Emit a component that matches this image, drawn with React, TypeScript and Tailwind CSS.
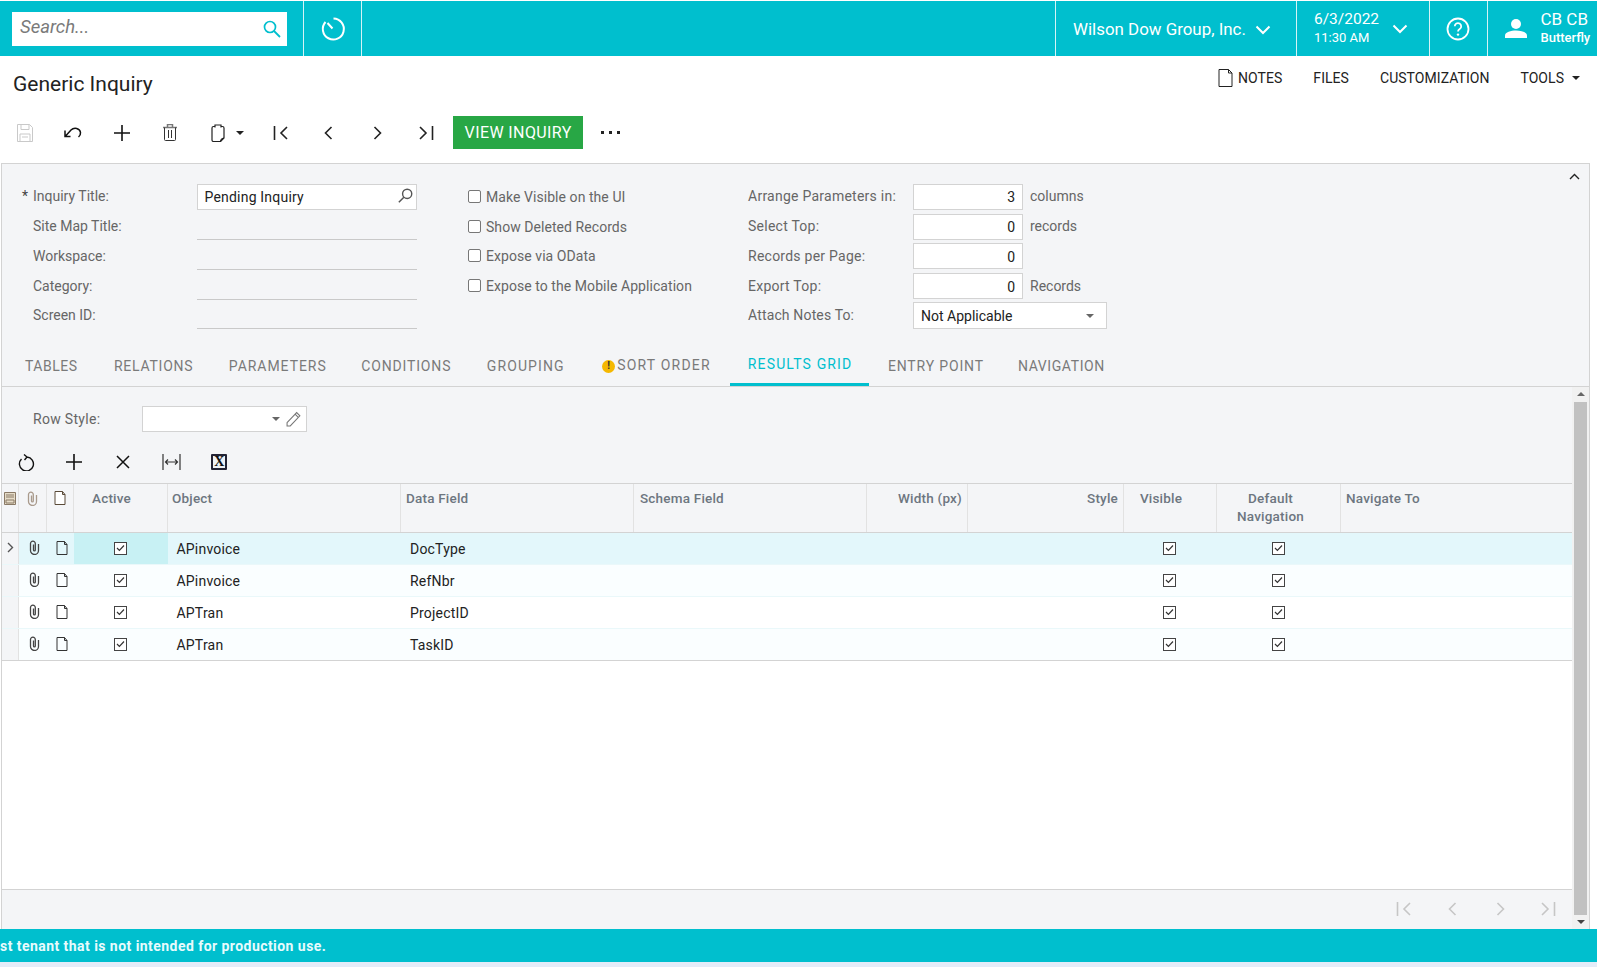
import React from "react";

const ROW_COLS =
  "grid grid-cols-[17px_28px_27px_94px_233px_233px_233px_101px_156px_93px_124px_232px]";

const Chevron = ({ className = "" }: { className?: string }) => (
  <svg width="16" height="10" viewBox="0 0 16 10" fill="none" className={className}>
    <path d="M1.500 1.500 8 8l6.500-6.500" stroke="currentColor" strokeWidth="2" />
  </svg>
);

const Caret = ({ className = "" }: { className?: string }) => (
  <svg width="8" height="4" viewBox="0 0 8 4" className={className}>
    <path d="M0 0h8L4 4z" fill="currentColor" />
  </svg>
);

const Search = ({ className = "" }: { className?: string }) => (
  <svg width="18" height="18" viewBox="0 0 18 18" fill="none" className={className}>
    <circle cx="7" cy="7" r="5.500" stroke="currentColor" strokeWidth="1.700" />
    <path d="m11 11 6 6" stroke="currentColor" strokeWidth="1.800" />
  </svg>
);

const Clip = ({ className = "" }: { className?: string }) => (
  <svg width="11" height="15" viewBox="0 0 11 15" fill="none" className={className}>
    <path
      d="M9.500 4v6.500a4 4 0 0 1-8 0V3.600a2.400 2.400 0 0 1 4.800 0V10a.9.9 0 0 1-1.800 0V4.400"
      stroke="currentColor"
      strokeWidth="1.300"
    />
  </svg>
);

const Note = ({ className = "" }: { className?: string }) => (
  <svg width="12" height="14" viewBox="0 0 12 14" fill="none" className={className}>
    <path d="M1 .5h7.500L11 3.500v10H1zM8.500 .5v3H11" stroke="currentColor" strokeWidth="1" />
  </svg>
);

const Check = () => (
  <span className="flex h-[13px] w-[13px] items-center justify-center border border-[#444] bg-white">
    <svg width="9" height="8" viewBox="0 0 9 8" fill="none">
      <path d="m1 4 2.400 2.400L8 1.500" stroke="#333" strokeWidth="1.200" />
    </svg>
  </span>
);

const EmptyCheck = () => (
  <span className="h-[13px] w-[13px] rounded-[2px] border border-[#777] bg-white" />
);

const First = ({ color = "#222" }: { color?: string }) => (
  <svg width="16" height="14" viewBox="0 0 16 14" fill="none">
    <path d="M1.500 0v14M14 1 8 7l6 6" stroke={color} strokeWidth="1.600" />
  </svg>
);
const Prev = ({ color = "#222" }: { color?: string }) => (
  <svg width="9" height="14" viewBox="0 0 9 14" fill="none">
    <path d="M7.500 1 1.500 7l6 6" stroke={color} strokeWidth="1.600" />
  </svg>
);
const Next = ({ color = "#222" }: { color?: string }) => (
  <svg width="9" height="14" viewBox="0 0 9 14" fill="none">
    <path d="m1.500 1 6 6-6 6" stroke={color} strokeWidth="1.600" />
  </svg>
);
const Last = ({ color = "#222" }: { color?: string }) => (
  <svg width="16" height="14" viewBox="0 0 16 14" fill="none">
    <path d="M14.500 0v14M2 1l6 6-6 6" stroke={color} strokeWidth="1.600" />
  </svg>
);

const Plus = () => (
  <svg width="16" height="16" viewBox="0 0 16 16" fill="none">
    <path d="M8 0v16M0 8h16" stroke="#111" strokeWidth="1.600" />
  </svg>
);

const IconSlot = ({ children }: { children: React.ReactNode }) => (
  <span className="flex w-[48.3px] items-center justify-center">{children}</span>
);

const tabs = [
  { label: "TABLES", cls: "tracking-[0.5px] pr-[19px]" },
  { label: "RELATIONS", cls: "tracking-[0.75px] pr-[18px]" },
  { label: "PARAMETERS", cls: "tracking-[0.95px] pr-[17px]" },
  { label: "CONDITIONS", cls: "tracking-[0.85px] pr-[18px]" },
  { label: "GROUPING", cls: "tracking-[1.1px] pr-[17px]" },
];

const rows = [
  { object: "APinvoice", field: "DocType", bg: "bg-[#e3f7fb]" },
  { object: "APinvoice", field: "RefNbr", bg: "bg-[#fafeff]" },
  { object: "APTran", field: "ProjectID", bg: "bg-white" },
  { object: "APTran", field: "TaskID", bg: "bg-[#fafeff]" },
];

const leftFields = ["Site Map Title:", "Workspace:", "Category:", "Screen ID:"];

const checks = [
  "Make Visible on the UI",
  "Show Deleted Records",
  "Expose via OData",
  "Expose to the Mobile Application",
];

const numbers = [
  { label: "Arrange Parameters in:", value: "3", suffix: "columns" },
  { label: "Select Top:", value: "0", suffix: "records" },
  { label: "Records per Page:", value: "0", suffix: "" },
  { label: "Export Top:", value: "0", suffix: "Records" },
];

export default function App() {
  return (
    <div className="flex h-[967px] w-full flex-col overflow-hidden bg-white font-['Roboto',sans-serif] text-[14px]">
      {/* top bar */}
      <div className="mt-px flex h-[55px] shrink-0 bg-[#00bfce] text-white">
        <div className="flex w-[304px] items-center border-r border-[#d5f3f6] pl-3">
          <div className="flex h-[34px] w-[275px] items-center justify-between bg-white pl-2 pr-[6px] text-[#00bfce]">
            <span className="-translate-y-px text-[18.5px] italic text-[#7a7a7a]">Search...</span>
            <Search />
          </div>
        </div>
        <div className="flex w-[58px] items-center justify-center border-r border-[#d5f3f6]">
          <svg width="26" height="26" viewBox="0 0 26 26" fill="none">
            <path d="M13.500 2.500A10.500 10.500 0 1 1 5.500 6M12.500 12.500 7.500 7" stroke="white" strokeWidth="2" />
          </svg>
        </div>
        <div className="w-[694px] border-r border-[#d5f3f6]" />
        <div className="flex w-[241px] items-center border-r border-[#d5f3f6] pl-[17px] pt-[3px]">
          <span className="text-[16.9px]">Wilson Dow Group, Inc.</span>
          <Chevron className="ml-[9px]" />
        </div>
        <div className="flex w-[132.5px] items-center border-r border-[#d5f3f6] pl-[17px]">
          <div className="-mt-[2px] flex w-[78px] flex-col">
            <span className="text-[15.5px] leading-[20px]">6/3/2022</span>
            <span className="text-[13px] leading-[18px]">11:30 AM</span>
          </div>
          <Chevron />
        </div>
        <div className="flex w-[58px] items-center justify-center border-r border-[#d5f3f6]">
          <svg width="24" height="24" viewBox="0 0 24 24" fill="none">
            <circle cx="12" cy="12" r="10.500" stroke="white" strokeWidth="1.800" />
            <path
              d="M8.800 9.300a3.200 3.200 0 1 1 4.900 2.700c-1.100.7-1.700 1.300-1.700 2.600"
              stroke="white"
              strokeWidth="1.800"
            />
            <circle cx="12" cy="17.600" r="1.200" fill="white" />
          </svg>
        </div>
        <div className="flex flex-1 items-center pl-[17px]">
          <svg width="22" height="22" viewBox="0 0 22 22" fill="white">
            <circle cx="11" cy="6" r="5" />
            <path d="M0 20v-2.500C0 14 6 12.500 11 12.500s11 1.500 11 5V20z" />
          </svg>
          <div className="-mt-[2px] ml-[14px] flex flex-col">
            <span className="text-[17px] leading-[20px]">CB CB</span>
            <span className="text-[13px] font-medium leading-[18px]">Butterfly</span>
          </div>
        </div>
      </div>

      {/* title + actions */}
      <div className="flex h-[44px] shrink-0 items-start justify-between pl-[13px]">
        <h1 className="mt-[15px] text-[21px] font-normal leading-[26px] text-[#222]">
          Generic Inquiry
        </h1>
        <div className="mt-[13px] flex items-center text-[14px] leading-[18px] tracking-[0.05px] text-[#222]">
          <svg width="15" height="18" viewBox="0 0 15 18" fill="none" className="mr-[5px]">
            <path d="M1 .5h9.500L14 4v13.500H1zM10.500 .5V4H14" stroke="#222" />
          </svg>
          <span>NOTES</span>
          <span className="ml-[31px]">FILES</span>
          <span className="ml-[31px]">CUSTOMIZATION</span>
          <span className="ml-[31px]">TOOLS</span>
          <Caret className="ml-2 mr-[17px]" />
        </div>
      </div>

      {/* main toolbar */}
      <div className="mt-[16px] flex h-[33px] shrink-0 items-center pl-[1px]">
        <IconSlot>
          <svg width="16" height="18" viewBox="0 0 16 18" fill="none" stroke="#c9c9c9">
            <path d="M.5.5h12l3 3v14H.5zM4 .5v5h8v-5M3 17.500V10h10v7.500M5 13h6" />
          </svg>
        </IconSlot>
        <IconSlot>
          <svg width="18" height="13" viewBox="0 0 18 13" fill="none" stroke="#111" strokeWidth="1.500">
            <path d="M1 4.500V10.500H6.500M1.600 10 7 4C10 1 16 2 16.500 6.500c.2 2-.8 3.500-2 4.500" />
          </svg>
        </IconSlot>
        <IconSlot>
          <Plus />
        </IconSlot>
        <IconSlot>
          <svg width="14" height="17" viewBox="0 0 14 17" fill="none" stroke="#333">
            <path d="M0 3.500h14M4.500 3V.5h5V3" stroke="#777" strokeWidth="1.500" />
            <path d="M1.500 3.500v12a1 1 0 0 0 1 1h9a1 1 0 0 0 1-1v-12M5.500 6v8M8.500 6v8" />
          </svg>
        </IconSlot>
        <span className="flex w-[62.3px] items-center pl-[17px]">
          <svg width="14" height="18" viewBox="0 0 14 18" fill="none" stroke="#222" strokeWidth="1.200">
            <path d="M4 2.500H2.500A1.500 1.500 0 0 0 1 4v12a1.500 1.500 0 0 0 1.500 1.500h7L13 14V4a1.500 1.500 0 0 0-1.500-1.500H10" />
            <path d="M4 3.500V1h6v2.500M9.500 17.500c.2-2 1.500-3.300 3.500-3.500" />
          </svg>
          <Caret className="ml-[11px] text-[#222]" />
        </span>
        <IconSlot>
          <First />
        </IconSlot>
        <IconSlot>
          <Prev />
        </IconSlot>
        <IconSlot>
          <Next />
        </IconSlot>
        <IconSlot>
          <Last />
        </IconSlot>
        <button className="ml-[3.5px] flex h-[33px] w-[130px] items-center justify-center bg-[#28a745] text-[16px] tracking-[0.4px] text-white">
          VIEW INQUIRY
        </button>
        <span className="ml-[18px] flex gap-[5.5px]">
          <span className="h-[2.5px] w-[2.5px] bg-[#222]" />
          <span className="h-[2.5px] w-[2.5px] bg-[#222]" />
          <span className="h-[2.5px] w-[2.5px] bg-[#222]" />
        </span>
      </div>

      {/* panel */}
      <div className="ml-px mr-[7px] mt-[14px] flex min-h-0 flex-1 flex-col border-x border-t border-[#d3d3d3] bg-[#f4f5f7]">
        <div className="flex h-[182px] shrink-0 pt-[18px]">
          <div className="w-[415px] pl-[20px]">
            <div className="flex h-[29.75px] items-center">
              <span className="w-[11px] text-[#444]">*</span>
              <span className="w-[163.5px] text-[#666]">Inquiry Title:</span>
              <div className="flex h-[26px] w-[220.5px] items-center justify-between border border-[#d3d3d3] bg-white pl-[7px] pr-[3px] pt-[2px] tracking-[0.2px] text-[#222]">
                <span>Pending Inquiry</span>
                <Search className="h-[15px] w-[15px] -translate-y-[2px] -scale-x-100 text-[#555]" />
              </div>
            </div>
            {leftFields.map((l) => (
              <div key={l} className="flex h-[29.75px] items-center pl-[11px]">
                <span className="w-[163.5px] text-[#666]">{l}</span>
                <div className="h-[27px] w-[220.5px] border-b border-[#c9c9c9]" />
              </div>
            ))}
          </div>
          <div className="ml-[50.5px] w-[280.5px]">
            {checks.map((c) => (
              <div key={c} className="flex h-[29.5px] items-center gap-[5.5px] tracking-[0.06px] text-[#666]">
                <EmptyCheck />
                <span className="translate-y-px">{c}</span>
              </div>
            ))}
          </div>
          <div>
            {numbers.map((n) => (
              <div key={n.label} className="flex h-[29.75px] items-center text-[#666]">
                <span className="w-[165px] tracking-[0.25px]">{n.label}</span>
                <div className="flex h-[26px] w-[110px] items-center justify-end border border-[#d3d3d3] bg-white pr-[7px] pt-[2px] text-[#222]">
                  {n.value}
                </div>
                <span className="ml-[7px]">{n.suffix}</span>
              </div>
            ))}
            <div className="flex h-[29.75px] items-center text-[#666]">
              <span className="w-[165px] tracking-[0.15px]">Attach Notes To:</span>
              <div className="flex h-[27px] w-[194px] items-center justify-between border border-[#d3d3d3] bg-white pl-[7px] pr-[12px] pt-[2px] text-[#222]">
                <span>Not Applicable</span>
                <Caret className="-translate-y-px text-[#666]" />
              </div>
            </div>
          </div>
          <div className="ml-auto mr-[9px] mt-[-9px]">
            <svg width="11" height="7" viewBox="0 0 11 7" fill="none">
              <path d="m1 6 4.500-4.500L10 6" stroke="#222" strokeWidth="1.400" />
            </svg>
          </div>
        </div>

        {/* tabs */}
        <div className="flex h-[41px] shrink-0 border-b border-[#d3d3d3] pl-[5.5px] text-[14px] text-[#7a7a7a]">
          {tabs.map((t) => (
            <div key={t.label} className={`flex items-center pl-[17.5px] ${t.cls}`}>
              {t.label}
            </div>
          ))}
          <div className="flex items-center pl-[20.5px] pr-[19.5px] tracking-[1.2px]">
            <span className="mr-[2px] flex h-[13px] w-[13px] items-center justify-center rounded-full bg-[#f5b800] text-[10px] font-bold leading-none tracking-normal text-[#333]">
              !
            </span>
            <span className="-translate-y-px">SORT ORDER</span>
          </div>
          <div className="flex items-center border-b-[3px] border-[#00bfce] pl-[17.5px] pr-[17px] tracking-[1.15px] text-[#00bfce]">
            RESULTS GRID
          </div>
          <div className="flex items-center pl-[18.5px] pr-[16.5px] tracking-[0.85px]">ENTRY POINT</div>
          <div className="flex items-center px-[17.5px] tracking-[0.6px]">NAVIGATION</div>
        </div>

        <div className="flex min-h-0 flex-1">
          <div className="flex min-w-0 flex-1 flex-col">
            {/* row style */}
            <div className="flex h-[59px] shrink-0 items-center pl-[31px] pt-[5px]">
              <span className="w-[109px] tracking-[0.3px] text-[#666]">Row Style:</span>
              <div className="flex h-[26px] w-[165px] items-center justify-end border border-[#d3d3d3] bg-white pr-[4px]">
                <Caret className="mr-[6px] text-[#666]" />
                <svg width="16" height="16" viewBox="0 0 15 15" fill="none" stroke="#777">
                  <path d="m1 11 9-9.500 3 3L4 14H1zM8.500 3l3 3" />
                </svg>
              </div>
            </div>

            {/* grid toolbar */}
            <div className="flex h-[37px] shrink-0 items-center pb-[5px]">
              <IconSlot>
                <svg width="17" height="17" viewBox="0 0 17 17" fill="none" stroke="#111" strokeWidth="1.400">
                  <path d="M3.500 5A7 7 0 1 0 9 3M6 .5 9 3l-2.500 3" />
                </svg>
              </IconSlot>
              <IconSlot>
                <Plus />
              </IconSlot>
              <IconSlot>
                <svg width="14" height="14" viewBox="0 0 14 14" fill="none">
                  <path d="m1 1 12 12M13 1 1 13" stroke="#111" strokeWidth="1.500" />
                </svg>
              </IconSlot>
              <IconSlot>
                <svg width="19" height="16" viewBox="0 0 19 16" fill="none" stroke="#333" strokeWidth="1.200">
                  <path d="M1 0v16M18 0v16M4 8h11M6 5.500 3.500 8 6 10.500M13 5.500 15.500 8 13 10.500" />
                </svg>
              </IconSlot>
              <IconSlot>
                <span className="flex h-[16px] w-[16px] items-center justify-center rounded-[1px] border-2 border-[#223] bg-[#eef2f6] font-['Liberation_Serif',serif] text-[14px] font-bold leading-none text-[#111]">
                  X
                </span>
              </IconSlot>
            </div>

            {/* grid */}
            <div className="flex min-h-0 flex-1 flex-col bg-white">
              <div className={`${ROW_COLS} h-[50px] shrink-0 border-y border-[#d3d3d3] bg-[#f4f5f7] text-[13.5px] font-medium leading-[18px] tracking-[0.2px] text-[#6d7680]`}>
                <div className="flex justify-center border-r border-[#e2e2e2] pt-[8px]">
                  <svg width="12" height="13" viewBox="0 0 12 13" fill="#e6dcc8" stroke="#8a7a66">
                    <path d="M.5.5h11v12H.5zM2 3h8M2 5h8M2 8h8v3H2z" />
                  </svg>
                </div>
                <div className="flex justify-center border-r border-[#e2e2e2] pt-[7px] text-[#a99a8c]">
                  <Clip />
                </div>
                <div className="flex justify-center border-r border-[#e2e2e2] pt-[7px] text-[#5a4a38]">
                  <Note className="fill-white" />
                </div>
                <div className="border-r border-[#e2e2e2] pr-[18px] pt-[5px] text-center">Active</div>
                <div className="border-r border-[#e2e2e2] pl-[4px] pt-[5px]">Object</div>
                <div className="border-r border-[#e2e2e2] pl-[5px] pt-[5px]">Data Field</div>
                <div className="border-r border-[#e2e2e2] pl-[6px] pt-[5px]">Schema Field</div>
                <div className="border-r border-[#e2e2e2] pr-[5px] pt-[5px] text-right">Width (px)</div>
                <div className="border-r border-[#e2e2e2] pr-[5px] pt-[5px] text-right">Style</div>
                <div className="border-r border-[#e2e2e2] pr-[18px] pt-[5px] text-center">Visible</div>
                <div className="border-r border-[#e2e2e2] pr-[16px] pt-[5px] text-center">
                  Default
                  <br />
                  Navigation
                </div>
                <div className="border-r border-[#e2e2e2] pl-[5px] pt-[5px]">Navigate To</div>
              </div>
              {rows.map((r, i) => (
                <div
                  key={i}
                  className={`${ROW_COLS} h-[32px] shrink-0 border-b ${i === 3 ? "border-[#d3d3d3]" : "border-[#eaf8fa]"} ${r.bg} tracking-[0.2px] text-[#222]`}
                >
                  <div className="flex items-center justify-center border-r border-[#e2e2e2] bg-[#f4f5f7] pb-[2px] text-[#666]">
                    {i === 0 && (
                      <svg width="7" height="11" viewBox="0 0 7 11" fill="none">
                        <path d="m1 1 4.500 4.500L1 10" stroke="#555" strokeWidth="1.400" />
                      </svg>
                    )}
                  </div>
                  <div className="flex items-center justify-center pb-[2px] pl-[3px] text-[#444]">
                    <Clip />
                  </div>
                  <div className="flex items-center justify-center pb-[2px] pl-[2px] text-[#333]">
                    <Note />
                  </div>
                  <div className={`flex items-center justify-center pb-[1px] pr-[2px] ${i === 0 ? "bg-[#c8f1f4]" : ""}`}>
                    <Check />
                  </div>
                  <div className="flex items-center pl-[8.5px] pt-[2px]">{r.object}</div>
                  <div className="flex items-center pl-[9px] pt-[2px]">{r.field}</div>
                  <div />
                  <div />
                  <div />
                  <div className="flex items-center justify-center pb-[1px] pr-[2px]">
                    <Check />
                  </div>
                  <div className="flex items-center justify-center pb-[1px] pr-[2px]">
                    <Check />
                  </div>
                  <div />
                </div>
              ))}
            </div>

            {/* pager */}
            <div className="flex h-[40px] shrink-0 items-center justify-end border-t border-[#d3d3d3] pb-[2px]">
              <span className="flex w-[48px] justify-center">
                <First color="#c6c6c6" />
              </span>
              <span className="flex w-[48px] justify-center">
                <Prev color="#c6c6c6" />
              </span>
              <span className="flex w-[48px] justify-center">
                <Next color="#c6c6c6" />
              </span>
              <span className="flex w-[48px] justify-center">
                <Last color="#c6c6c6" />
              </span>
            </div>
          </div>

          {/* scrollbar */}
          <div className="flex w-[17px] shrink-0 flex-col items-center bg-[#f1f1f1] px-[2px] pt-[5px] text-[#666]">
            <Caret className="rotate-180" />
            <div className="mt-[6px] w-full flex-1 bg-[#c1c1c1]" />
            <Caret className="my-[5px] text-[#444]" />
          </div>
        </div>
      </div>

      {/* tenant banner */}
      <div className="flex h-[33px] shrink-0 items-center bg-[#00bfce] pt-[2px] text-[14px] font-bold tracking-[0.45px] text-[#e8fbfd]">
        st tenant that is not intended for production use.
      </div>
      <div className="h-[5px] shrink-0 bg-[#e4ecf8]" />
    </div>
  );
}
